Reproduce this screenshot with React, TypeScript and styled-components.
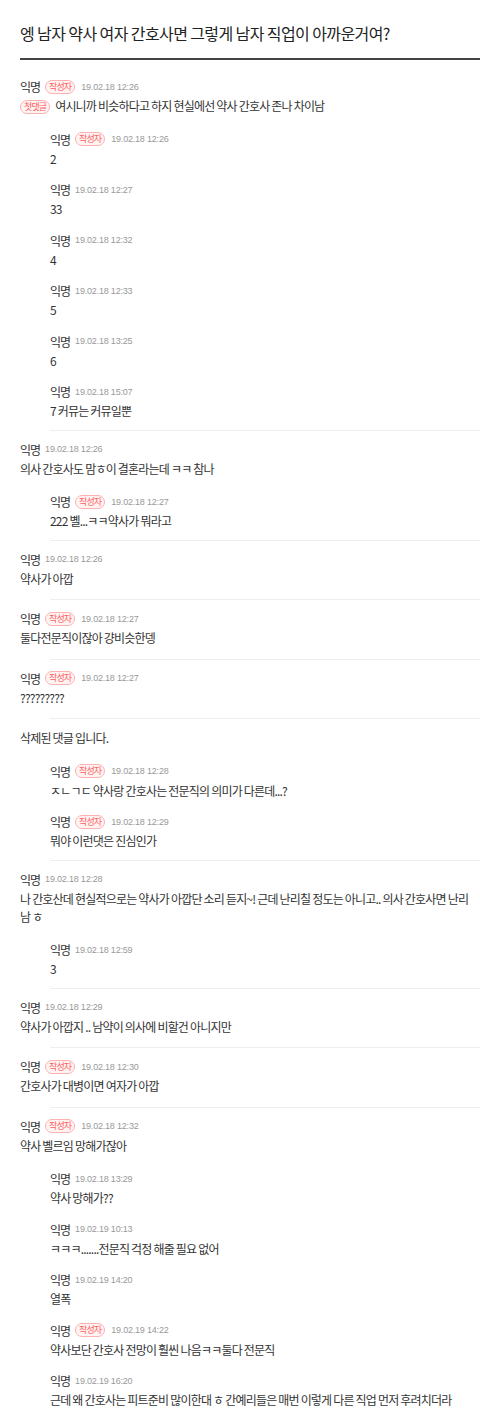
import React from "react";
import styled, { createGlobalStyle } from "styled-components";

const GlobalStyle = createGlobalStyle`
  body {
    margin: 0;
    background: #fff;
    font-family: "Noto Sans CJK KR", "Noto Sans", sans-serif;
    color: #333;
  }
`;

type Reply = {
  writer?: boolean;
  date: string;
  text: string;
};

type Thread = {
  writer?: boolean;
  first?: boolean;
  deleted?: boolean;
  date?: string;
  text?: string;
  replies?: Reply[];
};

const threads: Thread[] = [
  {
    writer: true,
    first: true,
    date: "19.02.18 12:26",
    text: "여시니까 비슷하다고 하지 현실에선 약사 간호사 존나 차이남",
    replies: [
      { writer: true, date: "19.02.18 12:26", text: "2" },
      { date: "19.02.18 12:27", text: "33" },
      { date: "19.02.18 12:32", text: "4" },
      { date: "19.02.18 12:33", text: "5" },
      { date: "19.02.18 13:25", text: "6" },
      { date: "19.02.18 15:07", text: "7 커뮤는 커뮤일뿐" },
    ],
  },
  {
    date: "19.02.18 12:26",
    text: "의사 간호사도 맘ㅎ이 결혼라는데 ㅋㅋ 참나",
    replies: [{ writer: true, date: "19.02.18 12:27", text: "222 볠...ㅋㅋ약사가 뭐라고" }],
  },
  { date: "19.02.18 12:26", text: "약사가 아깝" },
  { writer: true, date: "19.02.18 12:27", text: "둘다전문직이잖아 걍비슷한뎅" },
  { writer: true, date: "19.02.18 12:27", text: "?????????" },
  {
    deleted: true,
    replies: [
      { writer: true, date: "19.02.18 12:28", text: "ㅈㄴㄱㄷ 약사랑 간호사는 전문직의 의미가 다른데...?" },
      { writer: true, date: "19.02.18 12:29", text: "뭐야 이런댓은 진심인가" },
    ],
  },
  {
    date: "19.02.18 12:28",
    text: "나 간호산데 현실적으로는 약사가 아깝단 소리 듣지~! 근데 난리칠 정도는 아니고.. 의사 간호사면 난리남 ㅎ",
    replies: [{ date: "19.02.18 12:59", text: "3" }],
  },
  { date: "19.02.18 12:29", text: "약사가 아깝지 .. 남약이 의사에 비할건 아니지만" },
  { writer: true, date: "19.02.18 12:30", text: "간호사가 대병이면 여자가 아깝" },
  {
    writer: true,
    date: "19.02.18 12:32",
    text: "약사 볠르임 망해가잖아",
    replies: [
      { date: "19.02.18 13:29", text: "약사 망해가??" },
      { date: "19.02.19 10:13", text: "ㅋㅋㅋ.......전문직 걱정 해줄 필요 없어" },
      { date: "19.02.19 14:20", text: "열폭" },
      { writer: true, date: "19.02.19 14:22", text: "약사보단 간호사 전망이 훨씬 나음ㅋㅋ둘다 전문직" },
      { date: "19.02.19 16:20", text: "근데 왜 간호사는 피트준비 많이한대 ㅎ 간예리들은 매번 이렇게 다른 직업 먼저 후려치더라" },
    ],
  },
];

const Page = styled.div`
  padding-left: 20px;
`;

const Title = styled.h1`
  margin: 0;
  padding: 21px 0 13px;
  font-size: 16px;
  line-height: 24px;
  font-weight: 400;
  color: #222;
  letter-spacing: -0.6px;
  border-bottom: 2px solid #444;
`;

const List = styled.div`
  padding-top: 8.25px;
`;

const ThreadBox = styled.div`
  padding-top: 8.75px;

  &::after {
    content: "";
    display: block;
    margin: 9.75px 0 0 30px;
    height: 1px;
    background: #eee;
  }

  &:last-child::after {
    display: none;
  }
`;

const CommentBox = styled.div<{ $reply?: boolean }>`
  margin-left: ${(p) => (p.$reply ? "30px" : "0")};
  margin-top: ${(p) => (p.$reply ? "12.5px" : "0")};
  padding-bottom: ${(p) => (p.$reply ? "0" : "2px")};
`;

const Meta = styled.div`
  display: flex;
  align-items: center;
  height: 19px;
  gap: 5px;
`;

const Name = styled.span`
  font-size: 12px;
  color: #333;
  letter-spacing: -1px;
`;

const Badge = styled.span`
  display: inline-flex;
  align-items: center;
  justify-content: center;
  height: 12px;
  padding: 0 3px;
  border: 1px solid #ffb0b0;
  border-radius: 8px;
  background: #fff4f4;
  color: #ff5c5c;
  font-size: 9px;
  letter-spacing: -0.9px;
  line-height: 12px;
  margin-right: 1px;
`;

const DateText = styled.span`
  font-family: "Liberation Sans", Arial, sans-serif;
  font-size: 9px;
  color: #999;
  letter-spacing: -0.2px;
`;

const Content = styled.div`
  margin-top: 1px;
  font-size: 12px;
  line-height: 18px;
  color: #333;
  letter-spacing: -0.8px;
  padding-right: 8px;

  ${Badge} {
    margin-right: 5px;
    vertical-align: 1px;
  }
`;

const Deleted = styled.div`
  font-size: 12px;
  line-height: 18px;
  color: #333;
  letter-spacing: -0.8px;
  padding: 1px 0 2px;
`;

const MetaRow = ({ writer, date }: { writer?: boolean; date: string }) => (
  <Meta>
    <Name>익명</Name>
    {writer && <Badge>작성자</Badge>}
    <DateText>{date}</DateText>
  </Meta>
);

const App = () => {
  return (
    <Page>
      <GlobalStyle />
      <Title>엥 남자 약사 여자 간호사면 그렇게 남자 직업이 아까운거여?</Title>
      <List>
        {threads.map((t, i) => (
          <ThreadBox key={i}>
            {t.deleted ? (
              <Deleted>삭제된 댓글 입니다.</Deleted>
            ) : (
              <CommentBox>
                <MetaRow writer={t.writer} date={t.date!} />
                <Content>
                  {t.first && <Badge>첫댓글</Badge>}
                  {t.text}
                </Content>
              </CommentBox>
            )}
            {t.replies?.map((r, j) => (
              <CommentBox $reply key={j}>
                <MetaRow writer={r.writer} date={r.date} />
                <Content>{r.text}</Content>
              </CommentBox>
            ))}
          </ThreadBox>
        ))}
      </List>
    </Page>
  );
};

export default App;
